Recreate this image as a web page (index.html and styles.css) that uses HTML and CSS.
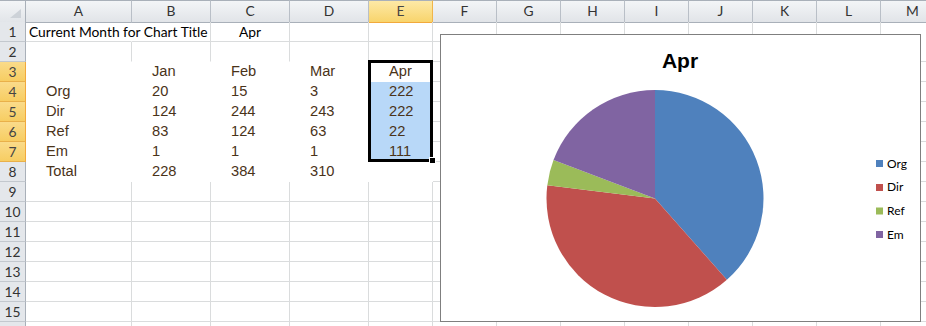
FILE: index.html
```html
<!DOCTYPE html>
<html lang="en">
<head>
    <meta charset="UTF-8">
    <title>Chart Title from Cell</title>
    <link rel="stylesheet" href="styles.css">
</head>
<body>
    <div class="sheet">
        <!-- column headers -->
        <div class="row head">
            <div class="corner">
                <svg width="26" height="22" viewBox="0 0 26 22"><polygon points="21,9 21,18 10,18" fill="#cdd2d8"/></svg>
            </div>
            <div class="ch">A</div><div class="ch">B</div><div class="ch">C</div><div class="ch">D</div>
            <div class="ch sel">E</div><div class="ch">F</div><div class="ch">G</div><div class="ch">H</div>
            <div class="ch">I</div><div class="ch">J</div><div class="ch">K</div><div class="ch">L</div><div class="ch">M</div>
        </div>

        <div class="row">
            <div class="rh">1</div>
            <div class="c nr">Current Month for Chart Title</div><div class="c"></div><div class="c mid">Apr</div>
            <div class="c"></div><div class="c"></div><div class="c"></div><div class="c"></div><div class="c"></div>
            <div class="c"></div><div class="c"></div><div class="c"></div><div class="c"></div>
        </div>
        <div class="row">
            <div class="rh">2</div>
            <div class="c nb"></div><div class="c nb"></div><div class="c nb"></div><div class="c nb"></div><div class="c nb"></div>
            <div class="c"></div><div class="c"></div><div class="c"></div><div class="c"></div>
            <div class="c"></div><div class="c"></div><div class="c"></div><div class="c"></div>
        </div>

        <!-- data block A3:E8 -->
        <div class="row">
            <div class="rh sel">3</div>
            <div class="c w"></div><div class="c w d">Jan</div><div class="c w d">Feb</div><div class="c w d">Mar</div><div class="c w d">Apr</div>
            <div class="c"></div><div class="c"></div><div class="c"></div><div class="c"></div>
            <div class="c"></div><div class="c"></div><div class="c"></div><div class="c"></div>
        </div>
        <div class="row">
            <div class="rh sel">4</div>
            <div class="c w d">Org</div><div class="c w d">20</div><div class="c w d">15</div><div class="c w d">3</div><div class="c w d blue">222</div>
            <div class="c"></div><div class="c"></div><div class="c"></div><div class="c"></div>
            <div class="c"></div><div class="c"></div><div class="c"></div><div class="c"></div>
        </div>
        <div class="row">
            <div class="rh sel">5</div>
            <div class="c w d">Dir</div><div class="c w d">124</div><div class="c w d">244</div><div class="c w d">243</div><div class="c w d blue">222</div>
            <div class="c"></div><div class="c"></div><div class="c"></div><div class="c"></div>
            <div class="c"></div><div class="c"></div><div class="c"></div><div class="c"></div>
        </div>
        <div class="row">
            <div class="rh sel">6</div>
            <div class="c w d">Ref</div><div class="c w d">83</div><div class="c w d">124</div><div class="c w d">63</div><div class="c w d blue">22</div>
            <div class="c"></div><div class="c"></div><div class="c"></div><div class="c"></div>
            <div class="c"></div><div class="c"></div><div class="c"></div><div class="c"></div>
        </div>
        <div class="row">
            <div class="rh sel">7</div>
            <div class="c w d">Em</div><div class="c w d">1</div><div class="c w d">1</div><div class="c w d">1</div><div class="c w d blue">111</div>
            <div class="c"></div><div class="c"></div><div class="c"></div><div class="c"></div>
            <div class="c"></div><div class="c"></div><div class="c"></div><div class="c"></div>
        </div>
        <div class="row">
            <div class="rh">8</div>
            <div class="c w d">Total</div><div class="c w d">228</div><div class="c w d">384</div><div class="c w d">310</div><div class="c w"></div>
            <div class="c"></div><div class="c"></div><div class="c"></div><div class="c"></div>
            <div class="c"></div><div class="c"></div><div class="c"></div><div class="c"></div>
        </div>

        <!-- empty rows -->
        <div class="row"><div class="rh">9</div><div class="c"></div><div class="c"></div><div class="c"></div><div class="c"></div><div class="c"></div><div class="c"></div><div class="c"></div><div class="c"></div><div class="c"></div><div class="c"></div><div class="c"></div><div class="c"></div><div class="c"></div></div>
        <div class="row"><div class="rh">10</div><div class="c"></div><div class="c"></div><div class="c"></div><div class="c"></div><div class="c"></div><div class="c"></div><div class="c"></div><div class="c"></div><div class="c"></div><div class="c"></div><div class="c"></div><div class="c"></div><div class="c"></div></div>
        <div class="row"><div class="rh">11</div><div class="c"></div><div class="c"></div><div class="c"></div><div class="c"></div><div class="c"></div><div class="c"></div><div class="c"></div><div class="c"></div><div class="c"></div><div class="c"></div><div class="c"></div><div class="c"></div><div class="c"></div></div>
        <div class="row"><div class="rh">12</div><div class="c"></div><div class="c"></div><div class="c"></div><div class="c"></div><div class="c"></div><div class="c"></div><div class="c"></div><div class="c"></div><div class="c"></div><div class="c"></div><div class="c"></div><div class="c"></div><div class="c"></div></div>
        <div class="row"><div class="rh">13</div><div class="c"></div><div class="c"></div><div class="c"></div><div class="c"></div><div class="c"></div><div class="c"></div><div class="c"></div><div class="c"></div><div class="c"></div><div class="c"></div><div class="c"></div><div class="c"></div><div class="c"></div></div>
        <div class="row"><div class="rh">14</div><div class="c"></div><div class="c"></div><div class="c"></div><div class="c"></div><div class="c"></div><div class="c"></div><div class="c"></div><div class="c"></div><div class="c"></div><div class="c"></div><div class="c"></div><div class="c"></div><div class="c"></div></div>
        <div class="row"><div class="rh">15</div><div class="c"></div><div class="c"></div><div class="c"></div><div class="c"></div><div class="c"></div><div class="c"></div><div class="c"></div><div class="c"></div><div class="c"></div><div class="c"></div><div class="c"></div><div class="c"></div><div class="c"></div></div>
        <div class="row"><div class="rh"></div><div class="c"></div><div class="c"></div><div class="c"></div><div class="c"></div><div class="c"></div><div class="c"></div><div class="c"></div><div class="c"></div><div class="c"></div><div class="c"></div><div class="c"></div><div class="c"></div><div class="c"></div></div>

        <!-- selection E3:E7 -->
        <div class="selection"></div>
        <div class="fill-handle"></div>

        <!-- embedded pie chart -->
        <div class="chart">
            <svg width="481" height="288" viewBox="0 0 481 288">
                <rect x="0.5" y="0.5" width="480" height="287" fill="#fff" stroke="#7f7f7f"/>
                <text class="chart-title" x="240" y="34" text-anchor="middle">Apr</text>
                <path d="M215,164.5 L215,56 A108.5,108.5 0 0 1 286.89,245.77 Z" fill="#4f81bd"/>
                <path d="M215,164.5 L286.89,245.77 A108.5,108.5 0 0 1 107.31,151.24 Z" fill="#c0504d"/>
                <path d="M215,164.5 L107.31,151.24 A108.5,108.5 0 0 1 113.53,126.07 Z" fill="#9bbb59"/>
                <path d="M215,164.5 L113.53,126.07 A108.5,108.5 0 0 1 215,56 Z" fill="#8064a2"/>

                <rect x="436" y="126" width="7" height="7" fill="#4f81bd"/>
                <text class="legend" x="447" y="133.5">Org</text>
                <rect x="436" y="150" width="7" height="7" fill="#c0504d"/>
                <text class="legend" x="447" y="157">Dir</text>
                <rect x="436" y="173.5" width="7" height="7" fill="#9bbb59"/>
                <text class="legend" x="447" y="181">Ref</text>
                <rect x="436" y="197" width="7" height="7" fill="#8064a2"/>
                <text class="legend" x="447" y="204.5">Em</text>
            </svg>
        </div>
    </div>
</body>
</html>
```

FILE: styles.css
```css
body {
    margin: 0;
    background: #fff;
    overflow: hidden;
}
.sheet {
    position: relative;
    width: 926px;
    height: 326px;
    overflow: hidden;
    font-family: Lato, "Liberation Sans", sans-serif;
    font-size: 13.8px;
    color: #000;
}
.row {
    display: grid;
    grid-template-columns: 26px 106px 79px 79px 79px repeat(9, 64px);
    height: 20px;
}
.row.head {
    height: 22px;
}
.row > div {
    box-sizing: border-box;
}

/* headers */
.corner {
    background: linear-gradient(#f3f5f7, #e2e5e9);
    border-top: 1px solid #a9b0b9;
    border-right: 1px solid #a9b0b9;
    border-bottom: 1px solid #a9b0b9;
}
.corner svg {
    display: block;
    margin-top: -1px;
}
.ch {
    background: linear-gradient(#f3f5f7, #e1e4e8);
    border-top: 1px solid #a9b0b9;
    border-right: 1px solid #b9bfc7;
    border-bottom: 1px solid #a9b0b9;
    text-align: center;
    line-height: 20px;
    color: #333;
}
.ch.sel {
    background: linear-gradient(#fde9a6, #f8d46c);
    border-right-color: #f0b54a;
    border-bottom-color: #f2a93b;
    color: #444;
}
.rh {
    background: #e4e7eb;
    border-right: 1px solid #a9b0b9;
    border-bottom: 1px solid #c3c8ce;
    text-align: center;
    line-height: 19px;
    color: #333;
}
.rh.sel {
    background: linear-gradient(#fadb8a, #f7cd62);
    border-right-color: #f2a93b;
    border-bottom-color: #e9b04a;
    color: #444;
}

/* cells */
.c {
    border-right: 1px solid #dadcdd;
    border-bottom: 1px solid #dadcdd;
    line-height: 19px;
    padding-left: 3px;
    white-space: nowrap;
    overflow: visible;
    position: relative;
}
.c.nr {
    border-right-color: transparent;
    z-index: 1;
}
.c.nb {
    border-bottom-color: #fff;
}
.c.w {
    background: #fff;
    border-right-color: #fff;
    border-bottom-color: #fff;
}
.c.mid {
    text-align: center;
    padding-left: 0;
}
.c.d {
    font-family: "Liberation Sans", Arial, sans-serif;
    font-size: 14.67px;
    color: #4a3319;
    padding-left: 20px;
}
.c.blue {
    background: #b8d8f8;
    border-right-color: #b8d8f8;
    border-bottom-color: #b8d8f8;
}

/* selection outline */
.selection {
    position: absolute;
    left: 368px;
    top: 60px;
    width: 65px;
    height: 102px;
    box-sizing: border-box;
    border: 3px solid #000;
}
.fill-handle {
    position: absolute;
    left: 429px;
    top: 157px;
    width: 7px;
    height: 7px;
    box-sizing: border-box;
    background: #000;
    border: 1px solid #fff;
}

/* chart */
.chart {
    position: absolute;
    left: 440px;
    top: 34px;
    width: 481px;
    height: 288px;
}
.chart svg {
    display: block;
}
.chart-title {
    font-family: "Liberation Sans", Arial, sans-serif;
    font-weight: bold;
    font-size: 21px;
    fill: #000;
}
.legend {
    font-family: Lato, "Liberation Sans", sans-serif;
    font-size: 12px;
    fill: #000;
}
```
